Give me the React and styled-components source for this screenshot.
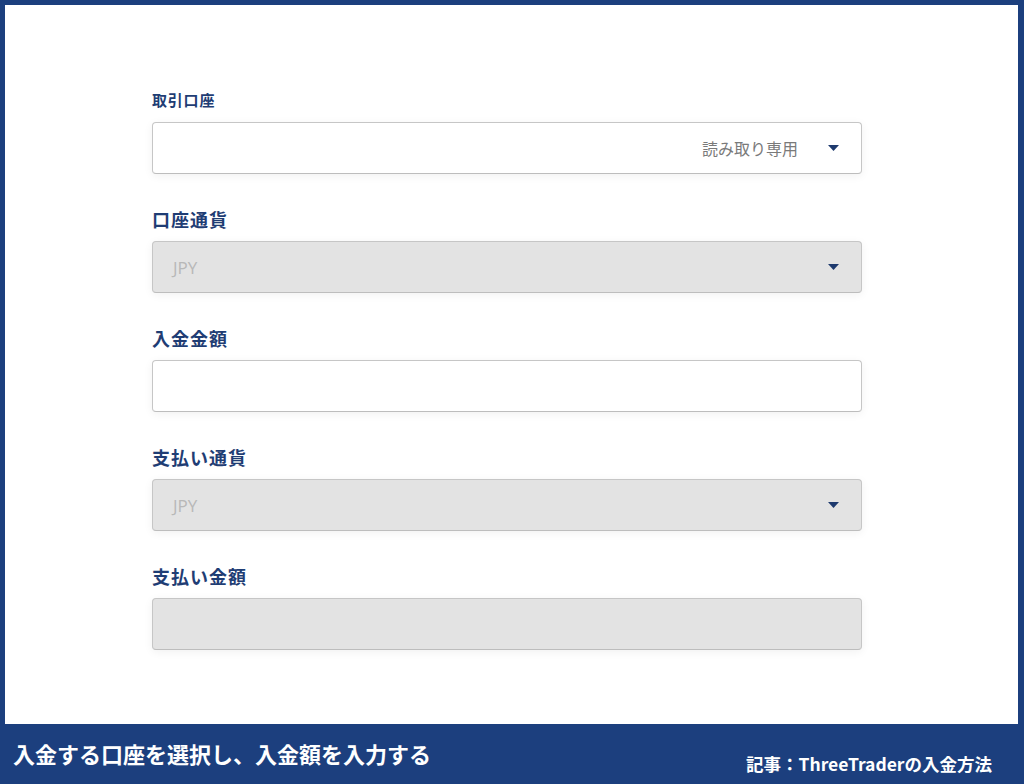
import styled, { createGlobalStyle } from "styled-components";

const GlobalStyle = createGlobalStyle`
    html, body {
        margin: 0;
        padding: 0;
    }
    body {
        font-family: "Noto Sans CJK JP", "Noto Sans", sans-serif;
    }
`

const Caret = () => (
    <svg width="11" height="6" viewBox="0 0 11 6">
        <path d="M0 0 L11 0 L5.5 6 Z" fill="#1e3a6e" />
    </svg>
)

const Field = ({ label, small, disabled, value, hint, select }) => {
    return (
        <StyledGroup>
            <StyledLabel $small={small}>{label}</StyledLabel>
            <StyledControl $disabled={disabled}>
                <StyledValue>{value}</StyledValue>
                {hint && <StyledHint>{hint}</StyledHint>}
                {select && <StyledCaret><Caret /></StyledCaret>}
            </StyledControl>
        </StyledGroup>
    )
}
const StyledGroup = styled.div`
    display: flex;
    flex-direction: column;
    margin-bottom: 35px;
`
const StyledLabel = styled.label`
    font-size: ${props => props.$small ? "15px" : "18px"};
    letter-spacing: ${props => props.$small ? "0.8px" : "1px"};
    font-weight: 700;
    line-height: 20px;
    color: #1f3d74;
    margin-bottom: 12px;
`
const StyledControl = styled.div`
    display: flex;
    align-items: center;
    height: 50px;
    padding: 0 20px;
    border: 1px solid #c6c6c6;
    border-bottom-color: #bdbdbd;
    border-radius: 4px;
    background: ${props => props.$disabled ? "#e3e3e3" : "#fff"};
    box-shadow: 0 2px 10px rgba(0, 0, 0, 0.06);
`
const StyledValue = styled.span`
    flex: 1;
    font-family: "Open Sans", "Noto Sans", sans-serif;
    font-size: 17px;
    color: #b8b8b8;
`
const StyledHint = styled.span`
    font-size: 16px;
    color: #7a7a7a;
    margin-right: 30px;
`
const StyledCaret = styled.span`
    display: flex;
    align-items: center;
    margin-right: 2px;
`

const App = () => {
    return (
        <>
            <GlobalStyle />
            <StyledFrame>
                <StyledSheet>
                    <StyledForm>
                        <Field label="取引口座" small hint="読み取り専用" select />
                        <Field label="口座通貨" disabled value="JPY" select />
                        <Field label="入金金額" />
                        <Field label="支払い通貨" disabled value="JPY" select />
                        <Field label="支払い金額" disabled />
                    </StyledForm>
                </StyledSheet>
                <StyledFooter>
                    <StyledCaption>入金する口座を選択し、入金額を入力する</StyledCaption>
                    <StyledSource>記事：ThreeTraderの入金方法</StyledSource>
                </StyledFooter>
            </StyledFrame>
        </>
    )
}
const StyledFrame = styled.div`
    display: flex;
    flex-direction: column;
    height: 784px;
    box-sizing: border-box;
    padding: 5px 6px 0 5px;
    background: #1c3f7e;
`
const StyledSheet = styled.div`
    flex: 1;
    background: #fff;
    padding-top: 85px;
`
const StyledForm = styled.div`
    width: 710px;
    margin-left: 147px;
`
const StyledFooter = styled.div`
    display: flex;
    justify-content: space-between;
    height: 60px;
    box-sizing: border-box;
    padding: 0 26px 0 8px;
    color: #fff;
    font-weight: 700;
`
const StyledCaption = styled.p`
    margin: 15px 0 0;
    font-size: 22px;
    line-height: 28px;
`
const StyledSource = styled.p`
    margin: 29px 0 0;
    font-size: 17.5px;
    line-height: 22px;
`

export default App
